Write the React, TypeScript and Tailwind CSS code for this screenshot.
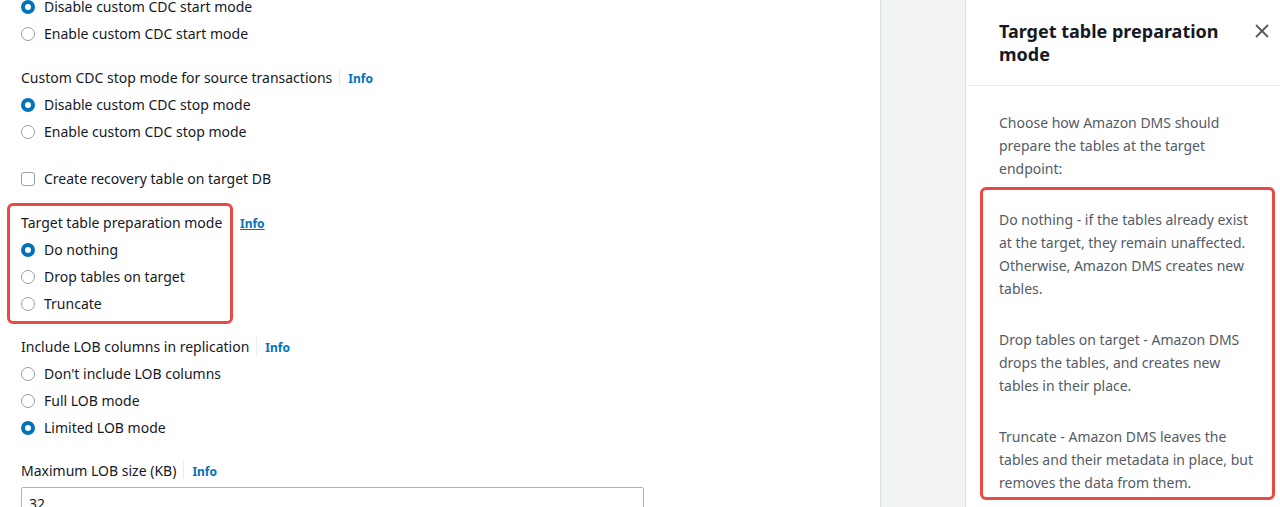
import { X } from "lucide-react";

const font = { fontFamily: '"Noto Sans", "Open Sans", sans-serif' };

const Radio = ({ label, checked }: { label: string; checked?: boolean }) => (
  <div className="flex h-[27px] items-center gap-[9px]">
    {checked ? (
      <span className="h-[14px] w-[14px] rounded-full border-[4px] border-[#0073bb] bg-white" />
    ) : (
      <span className="h-[14px] w-[14px] rounded-full border-[1.5px] border-[#95a1a2] bg-white" />
    )}
    <span>{label}</span>
  </div>
);

const Info = ({ underline }: { underline?: boolean }) => (
  <span
    className={
      "text-[12px] font-bold text-[#0073bb] " + (underline ? "underline" : "")
    }
  >
    Info
  </span>
);

const Label = ({ text }: { text: string }) => (
  <div className="mb-[3px] flex h-[22px] items-center">
    <span>{text}</span>
    <span className="ml-[7px] h-[18px] border-l border-[#eaeded]" />
    <span className="ml-[8px]">
      <Info />
    </span>
  </div>
);

export default function App() {
  return (
    <div
      className="flex h-[507px] w-[1280px] overflow-hidden bg-white text-[14px] text-[#16191f]"
      style={font}
    >
      {/* main form */}
      <div className="w-[880px] pl-[21px]">
        <div className="mt-[-7px]">
          <Radio label="Disable custom CDC start mode" checked />
          <Radio label="Enable custom CDC start mode" />
        </div>

        <div className="mt-[19px]">
          <Label text="Custom CDC stop mode for source transactions" />
          <Radio label="Disable custom CDC stop mode" checked />
          <Radio label="Enable custom CDC stop mode" />
        </div>

        <div className="mt-[20px] flex h-[27px] items-center gap-[9px]">
          <span className="h-[14px] w-[14px] rounded-[3px] border-[1.5px] border-[#95a1a2]" />
          <span>Create recovery table on target DB</span>
        </div>

        <div className="mt-[11px] flex items-start">
          <div className="ml-[-14px] w-[226px] rounded-[6px] border-[3px] border-[#ea4a44] pb-[4px] pl-[11px] pt-[5px]">
            <div className="mb-[3px] flex h-[22px] items-center">
              Target table preparation mode
            </div>
            <Radio label="Do nothing" checked />
            <Radio label="Drop tables on target" />
            <Radio label="Truncate" />
          </div>
          <div className="ml-[7px] mt-[9px]">
            <Info underline />
          </div>
        </div>

        <div className="mt-[11px]">
          <Label text="Include LOB columns in replication" />
          <Radio label="Don't include LOB columns" />
          <Radio label="Full LOB mode" />
          <Radio label="Limited LOB mode" checked />
        </div>

        <div className="mt-[18px]">
          <Label text="Maximum LOB size (KB)" />
          <div className="mt-[6px] flex h-[32px] w-[623px] items-center rounded-[2px] border border-[#aab7b8] px-[7px]">
            32
          </div>
        </div>
      </div>

      {/* gutter */}
      <div className="w-[86px] border-x border-[#dcdfdf] bg-[#f2f3f3]" />

      {/* help panel */}
      <div className="flex-1">
        <div className="flex h-[86px] border-b border-[#eaeded] pl-[33px] pr-[7px] pt-[8px]">
          <h2 className="mt-[12px] w-[228px] text-[18px] font-bold leading-[23px] text-[#16191f]">
            Target table preparation mode
          </h2>
          <button className="ml-auto mt-[12px] h-[22px] text-[#545b64]">
            <X size={22} strokeWidth={2} />
          </button>
        </div>
        <div className="pl-[33px] pt-[25px] leading-[23px] text-[#545b64]">
          <p className="w-[230px]">
            Choose how Amazon DMS should prepare the tables at the target
            endpoint:
          </p>
          <div className="ml-[-19px] mt-[7px] w-[295px] rounded-[6px] border-[3px] border-[#ea4a44] pb-[3px] pl-[16px] pr-[12px] pt-[18px]">
            <p>
              Do nothing - if the tables already exist at the target, they
              remain unaffected. Otherwise, Amazon DMS creates new tables.
            </p>
            <p className="mt-[28px]">
              Drop tables on target - Amazon DMS drops the tables, and creates
              new tables in their place.
            </p>
            <p className="mt-[28px]">
              Truncate - Amazon DMS leaves the tables and their metadata in
              place, but removes the data from them.
            </p>
          </div>
        </div>
      </div>
    </div>
  );
}
